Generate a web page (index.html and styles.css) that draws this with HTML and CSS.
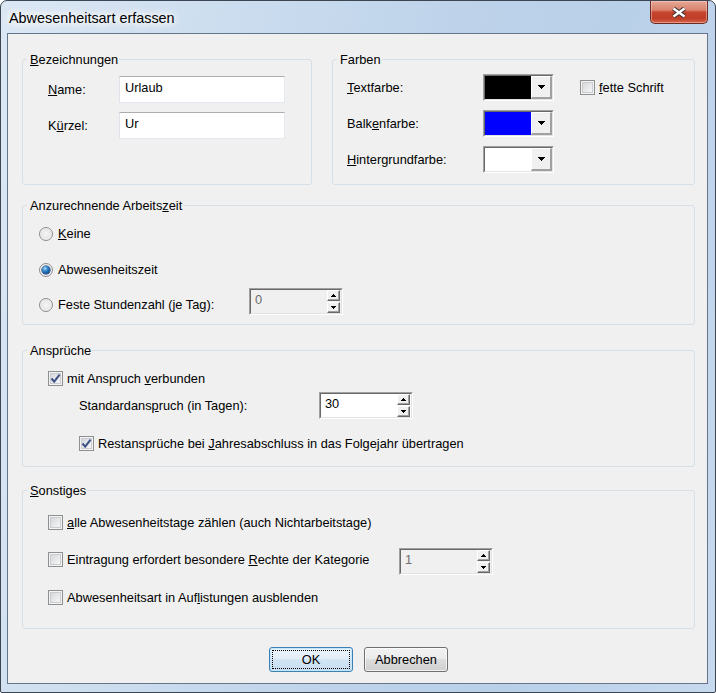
FILE: index.html
```html
<!DOCTYPE html>
<html lang="de">
<head>
<meta charset="utf-8">
<title>Abwesenheitsart erfassen</title>
<link rel="stylesheet" href="styles.css">
</head>
<body>
<div class="window">
  <div class="titlebar">
    <span class="title">Abwesenheitsart erfassen</span>
    <div class="close">
      <svg width="18" height="13" viewBox="0 0 18 13"><path d="M3.5 2.5 L14.5 10.5 M14.5 2.5 L3.5 10.5" stroke="#3b3232" stroke-width="4.6" fill="none"/><path d="M3.5 2.5 L14.5 10.5 M14.5 2.5 L3.5 10.5" stroke="#fff" stroke-width="2.4" fill="none"/></svg>
    </div>
  </div>
  <div class="client">
    <div class="top-row">
      <fieldset class="group g-names">
        <legend><u>B</u>ezeichnungen</legend>
        <div class="names-grid">
          <span class="lbl"><u>N</u>ame:</span>
          <input class="edit" type="text" value="Urlaub">
          <span class="lbl">K<u>ü</u>rzel:</span>
          <input class="edit" type="text" value="Ur">
        </div>
      </fieldset>
      <fieldset class="group g-colors">
        <legend>Farben</legend>
        <div class="colors-grid">
          <span class="lbl"><u>T</u>extfarbe:</span>
          <div class="combo"><div class="combo-in"><span class="swatch sw-black"></span><span class="drop"><svg width="7" height="4" viewBox="0 0 7 4"><path d="M0 0h7v1H0z M1 1h5v1H1z M2 2h3v1H2z M3 3h1v1H3z" fill="#000"/></svg></span></div></div>
          <label class="chk bold-chk"><span class="cb"></span><span><u>f</u>ette Schrift</span></label>
          <span class="lbl">Balk<u>e</u>nfarbe:</span>
          <div class="combo"><div class="combo-in"><span class="swatch sw-blue"></span><span class="drop"><svg width="7" height="4" viewBox="0 0 7 4"><path d="M0 0h7v1H0z M1 1h5v1H1z M2 2h3v1H2z M3 3h1v1H3z" fill="#000"/></svg></span></div></div>
          <span></span>
          <span class="lbl"><u>H</u>intergrundfarbe:</span>
          <div class="combo"><div class="combo-in"><span class="swatch sw-white"></span><span class="drop"><svg width="7" height="4" viewBox="0 0 7 4"><path d="M0 0h7v1H0z M1 1h5v1H1z M2 2h3v1H2z M3 3h1v1H3z" fill="#000"/></svg></span></div></div>
        </div>
      </fieldset>
    </div>

    <fieldset class="group g-time">
      <legend>Anzurechnende Arbeits<u>z</u>eit</legend>
      <div class="time-body">
        <label class="opt"><span class="radio"></span><span><u>K</u>eine</span></label>
        <label class="opt opt-2"><span class="radio on"></span><span>Abwesenheitszeit</span></label>
        <div class="line line-3">
          <label class="opt opt-fixed"><span class="radio"></span><span>Feste Stundenzahl (je Tag):</span></label>
          <div class="spin disabled"><div class="spin-in"><span class="spin-val">0</span><span class="spin-btns"><span class="sb"><svg width="5" height="3" viewBox="0 0 5 3"><path d="M2 0h1v1H2z M1 1h3v1H1z M0 2h5v1H0z" fill="#000"/></svg></span><span class="sb"><svg width="5" height="3" viewBox="0 0 5 3"><path d="M0 0h5v1H0z M1 1h3v1H1z M2 2h1v1H2z" fill="#000"/></svg></span></span></div></div>
        </div>
      </div>
    </fieldset>

    <fieldset class="group g-claims">
      <legend>Ansprüche</legend>
      <div class="claims-body">
        <label class="chk"><span class="cb on"><svg width="11" height="11" viewBox="0 0 11 11"><path d="M1.5 5.5 L4.2 8.6 L9.6 1.6" stroke="#3e5288" stroke-width="2" fill="none"/></svg></span><span>mit Anspruch <u>v</u>erbunden</span></label>
        <div class="line std">
          <span class="lbl std-lbl">Standardans<u>p</u>ruch (in Tagen):</span>
          <div class="spin"><div class="spin-in"><span class="spin-val">30</span><span class="spin-btns"><span class="sb"><svg width="5" height="3" viewBox="0 0 5 3"><path d="M2 0h1v1H2z M1 1h3v1H1z M0 2h5v1H0z" fill="#000"/></svg></span><span class="sb"><svg width="5" height="3" viewBox="0 0 5 3"><path d="M0 0h5v1H0z M1 1h3v1H1z M2 2h1v1H2z" fill="#000"/></svg></span></span></div></div>
        </div>
        <label class="chk rest"><span class="cb on"><svg width="11" height="11" viewBox="0 0 11 11"><path d="M1.5 5.5 L4.2 8.6 L9.6 1.6" stroke="#3e5288" stroke-width="2" fill="none"/></svg></span><span>Restansprüche bei <u>J</u>ahresabschluss in das Folgejahr übertragen</span></label>
      </div>
    </fieldset>

    <fieldset class="group g-misc">
      <legend><u>S</u>onstiges</legend>
      <div class="misc-body">
        <label class="chk"><span class="cb"></span><span><u>a</u>lle Abwesenheitstage zählen (auch Nichtarbeitstage)</span></label>
        <div class="line misc-2">
          <label class="chk misc-2-chk"><span class="cb"></span><span>Eintragung erfordert besondere <u>R</u>echte der Kategorie</span></label>
          <div class="spin disabled"><div class="spin-in"><span class="spin-val">1</span><span class="spin-btns"><span class="sb"><svg width="5" height="3" viewBox="0 0 5 3"><path d="M2 0h1v1H2z M1 1h3v1H1z M0 2h5v1H0z" fill="#000"/></svg></span><span class="sb"><svg width="5" height="3" viewBox="0 0 5 3"><path d="M0 0h5v1H0z M1 1h3v1H1z M2 2h1v1H2z" fill="#000"/></svg></span></span></div></div>
        </div>
        <label class="chk misc-3"><span class="cb"></span><span>Abwesenheitsart in Auf<u>l</u>istungen ausblenden</span></label>
      </div>
    </fieldset>

    <div class="buttons">
      <button class="btn default" type="button">OK</button>
      <button class="btn" type="button">Abbrechen</button>
    </div>
  </div>
</div>
</body>
</html>
```

FILE: styles.css
```css
html, body {
  margin: 0;
  background: #ffffff;
}

body {
  font-family: "Liberation Sans", Arial, sans-serif;
  font-size: 12.8px;
  line-height: 15px;
  color: #000;
}

u {
  text-decoration: underline;
  text-underline-offset: 1px;
}

.window {
  width: 716px;
  height: 693px;
  box-sizing: border-box;
  border: 1px solid #3c4653;
  border-radius: 7px 7px 2px 2px;
  padding: 0 7px 8px 6px;
  background: linear-gradient(100deg, #dbe7f4 0%, #cddeef 25%, #bed3ea 55%, #b9d0e9 75%, #c6d9ee 100%);
  display: flex;
  flex-direction: column;
  overflow: hidden;
}

.titlebar {
  height: 32px;
  flex: none;
  display: flex;
  align-items: flex-start;
}

.title {
  margin: 8px 0 0 2px;
  font-size: 14.4px;
  line-height: 18px;
  color: #000;
  text-shadow: 0 0 10px #fff, 0 0 10px #fff, 0 0 6px #fff, 0 0 14px rgba(255,255,255,0.9);
}

.close {
  margin-left: auto;
  width: 58px;
  height: 23px;
  box-sizing: border-box;
  border: 1px solid #6b2b22;
  border-top: none;
  border-radius: 0 0 5px 5px;
  background: linear-gradient(#e6a796 0%, #d9846f 40%, #c6432d 52%, #c03f28 80%, #d5664a 100%);
  box-shadow: inset 0 0 0 1px rgba(255, 220, 210, 0.45);
  display: flex;
  align-items: center;
  justify-content: center;
}

.close svg {
  margin-top: 1px;
}

.client {
  flex: 1;
  min-height: 0;
  border: 1px solid #65768a;
  background: #f0f0f0;
  padding: 18px 12px 0 14px;
  display: flex;
  flex-direction: column;
}

.top-row {
  display: flex;
  gap: 20px;
}

.group {
  margin: 0;
  padding: 0;
  border: 1px solid #d5dfe5;
  border-radius: 3px;
  box-sizing: border-box;
  min-width: 0;
  min-inline-size: 0;
}

.group > legend {
  margin-left: 4px;
  padding: 0 1px 0 3px;
  line-height: 15px;
}

.g-names {
  width: 290px;
  height: 133px;
  flex: none;
}

.g-colors {
  flex: 1;
  height: 133px;
}

.g-time {
  height: 127px;
  margin-top: 13px;
}

.g-claims {
  height: 124px;
  margin-top: 18px;
}

.g-misc {
  height: 146px;
  margin-top: 16px;
}

/* Bezeichnungen */
.names-grid {
  display: grid;
  grid-template-columns: 71px 166px;
  grid-auto-rows: 27px;
  row-gap: 9px;
  align-items: center;
  padding: 9px 0 0 25px;
}

.edit {
  box-sizing: border-box;
  width: 166px;
  height: 27px;
  margin: 0;
  border: 1px solid;
  border-color: #abadb3 #e3e9ef #e3e9ef #e2e3ea;
  background: #fff;
  font: inherit;
  color: #000;
  padding: 3px 5px 7px;
  outline: none;
}

/* Farben */
.colors-grid {
  display: grid;
  grid-template-columns: 136px 71px auto;
  grid-auto-rows: 27px;
  row-gap: 9px;
  align-items: center;
  padding: 7px 0 0 14px;
}

.bold-chk {
  margin-left: 26px;
}

.combo {
  box-sizing: border-box;
  width: 71px;
  height: 27px;
  border: 1px solid;
  border-color: #a0a0a0 #ffffff #ffffff #a0a0a0;
}

.combo-in {
  display: flex;
  height: 100%;
  box-sizing: border-box;
  border: 1px solid;
  border-color: #696969 #e3e3e3 #e3e3e3 #696969;
}

.swatch {
  flex: 1;
}

.sw-black { background: #000000; }
.sw-blue { background: #0000ff; }
.sw-white { background: #ffffff; }

.drop {
  width: 21px;
  box-sizing: border-box;
  background: #f0f0f0;
  border-style: solid;
  border-width: 1px 2px 2px 1px;
  border-color: #ffffff #a0a0a0 #a0a0a0 #ffffff;
  display: flex;
  align-items: center;
  justify-content: center;
}

.drop svg {
  display: block;
  margin-left: 1px;
}

/* checkbox / radio */
.chk {
  display: inline-flex;
  align-items: center;
  gap: 4px;
  white-space: nowrap;
}

.cb {
  width: 15px;
  height: 15px;
  flex: none;
  box-sizing: border-box;
  border: 1px solid #8e8f8f;
  background: linear-gradient(135deg, #cdd0d4 0%, #e4e5e7 45%, #f6f6f6 85%, #ffffff 100%);
  box-shadow: inset 0 0 0 1px #f4f4f4, inset 0 0 0 2px #c9ccd0;
  display: flex;
  align-items: center;
  justify-content: center;
}

.cb svg {
  display: block;
}

.opt {
  display: inline-flex;
  align-items: center;
  gap: 5px;
  white-space: nowrap;
}

.radio {
  width: 14px;
  height: 14px;
  flex: none;
  box-sizing: border-box;
  border-radius: 50%;
  border: 1px solid #8a8c8e;
  background: radial-gradient(circle at 50% 50%, #f6f6f6 0%, #eaeaea 45%, #cfd1d5 100%);
  box-shadow: inset 0 0 0 1px #f4f4f4;
  display: flex;
  align-items: center;
  justify-content: center;
}

.radio.on::after {
  content: "";
  width: 8px;
  height: 8px;
  border-radius: 50%;
  background: radial-gradient(circle at 38% 32%, #bfe6ff 0%, #3f93d8 28%, #155aa3 62%, #0a2f63 100%);
  box-shadow: 0 0 0 0.6px #122f57;
}

/* Anzurechnende Arbeitszeit */
.time-body {
  display: flex;
  flex-direction: column;
  align-items: flex-start;
  padding: 13px 0 0 16px;
}

.opt-2 {
  margin-top: 21px;
}

.line {
  display: flex;
  align-items: flex-start;
}

.line-3 {
  margin-top: 11px;
}

.opt-fixed {
  width: 210px;
  margin-top: 9px;
}

/* spin edit */
.spin {
  box-sizing: border-box;
  width: 94px;
  height: 27px;
  flex: none;
  border: 1px solid;
  border-color: #a0a0a0 #ffffff #ffffff #a0a0a0;
  background: #fff;
}

.spin-in {
  display: flex;
  height: 100%;
  box-sizing: border-box;
  border: 1px solid;
  border-color: #696969 #e3e3e3 #e3e3e3 #696969;
}

.spin-val {
  flex: 1;
  padding: 2px 0 0 4px;
}

.spin.disabled {
  background: #f0f0f0;
}

.spin.disabled .spin-val {
  color: #6d6d6d;
}

.spin-btns {
  width: 13px;
  display: flex;
  flex-direction: column;
  gap: 1px;
  margin: 0 1px 0 0;
}

.sb {
  flex: 1;
  box-sizing: border-box;
  background: #f0f0f0;
  border: 1px solid;
  border-color: #ffffff #696969 #696969 #ffffff;
  box-shadow: inset -1px -1px 0 #a0a0a0;
  display: flex;
  align-items: center;
  justify-content: center;
}

.sb svg {
  display: block;
}

/* Ansprüche */
.claims-body {
  display: flex;
  flex-direction: column;
  align-items: flex-start;
  padding: 13px 0 0 25px;
}

.std {
  align-items: center;
  margin-top: 6px;
  padding-left: 31px;
}

.std-lbl {
  width: 240px;
}

.rest {
  margin: 17px 0 0 31px;
}

/* Sonstiges */
.misc-body {
  display: flex;
  flex-direction: column;
  align-items: flex-start;
  padding: 17px 0 0 25px;
}

.misc-2 {
  margin-top: 18px;
}

.misc-2-chk {
  width: 351px;
  margin-top: 4px;
}

.misc-3 {
  margin-top: 15px;
}

/* Buttons */
.buttons {
  display: flex;
  justify-content: center;
  gap: 11px;
  margin-top: 18px;
}

.btn {
  width: 84px;
  height: 25px;
  margin: 0;
  padding: 0;
  box-sizing: border-box;
  border: 1px solid #707070;
  border-radius: 3px;
  background: linear-gradient(#f2f2f2 0%, #ebebeb 49%, #dddddd 50%, #cfcfcf 100%);
  box-shadow: inset 0 0 0 1px rgba(255, 255, 255, 0.7);
  font: inherit;
  color: #000;
}

.btn.default {
  border-color: #3c7fb1;
  background: linear-gradient(#eaf4fb 0%, #e2eef8 49%, #d2e5f4 50%, #c6dcef 100%);
  box-shadow: inset 0 0 0 1px #c4e6f8;
  outline: 1px dotted #000;
  outline-offset: -4px;
}
```
